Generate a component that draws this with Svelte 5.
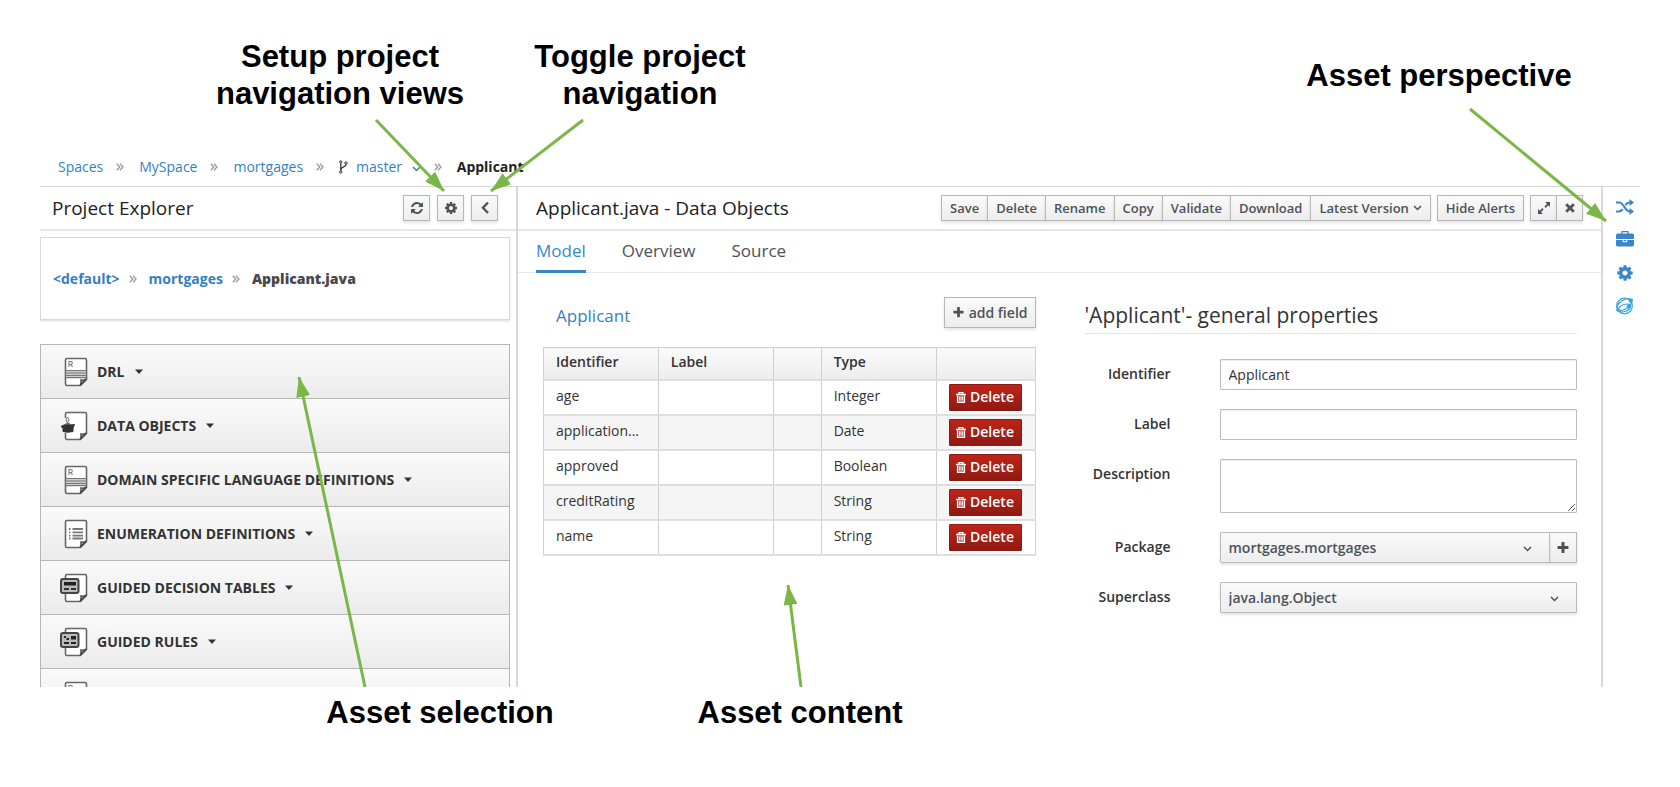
<script>
  const crumbs = ['Spaces', 'MySpace', 'mortgages'];
  const groups = [
    { name: 'DRL', icon: 'rule' },
    { name: 'DATA OBJECTS', icon: 'cup' },
    { name: 'DOMAIN SPECIFIC LANGUAGE DEFINITIONS', icon: 'rule' },
    { name: 'ENUMERATION DEFINITIONS', icon: 'list' },
    { name: 'GUIDED DECISION TABLES', icon: 'table' },
    { name: 'GUIDED RULES', icon: 'form' },
    { name: '', icon: 'rule' }
  ];
  const actions = ['Save', 'Delete', 'Rename', 'Copy', 'Validate', 'Download'];
  const fields = [
    ['age', 'Integer'],
    ['application...', 'Date'],
    ['approved', 'Boolean'],
    ['creditRating', 'String'],
    ['name', 'String']
  ];
  const paths = {
    refresh: 'M1639 1056q0 5-1 7-64 268-268 434.500t-478 166.500q-146 0-282.500-55t-243.500-157l-129 129q-19 19-45 19t-45-19-19-45v-448q0-26 19-45t45-19h448q26 0 45 19t19 45-19 45l-137 137q71 66 161 102t187 36q134 0 250-65t186-179q11-17 53-117 8-23 30-23h192q13 0 22.500 9.500t9.500 22.500zm25-800v448q0 26-19 45t-45 19h-448q-26 0-45-19t-19-45 19-45l138-138q-148-137-349-137-134 0-250 65t-186 179q-11 17-53 117-8 23-30 23h-199q-13 0-22.500-9.500t-9.500-22.500v-7q65-268 270-434.500t480-166.500q146 0 284 55.500t245 156.500l130-129q19-19 45-19t45 19 19 45z',
    cog: 'M1152 896q0-106-75-181t-181-75-181 75-75 181 75 181 181 75 181-75 75-181zm512-109v222q0 12-8 23t-20 13l-185 28q-19 54-39 91 35 50 107 138 10 12 10 25t-9 23q-27 37-99 108t-94 71q-12 0-26-9l-138-108q-44 23-91 38-16 136-29 186-7 28-36 28h-222q-14 0-24.500-8.500t-11.500-21.500l-28-184q-49-16-90-37l-141 107q-10 9-25 9-14 0-25-11-126-114-165-168-7-10-7-23 0-12 8-23 15-21 51-66.500t54-70.500q-27-50-41-99l-183-27q-13-2-21-12.500t-8-23.500v-222q0-12 8-23t19-13l186-28q14-46 39-92-40-57-107-138-10-12-10-24 0-10 9-23 26-36 98.500-107.500t94.500-71.500q13 0 26 10l138 107q44-23 91-38 16-136 29-186 7-28 36-28h222q14 0 24.500 8.500t11.500 21.500l28 184q49 16 90 37l142-107q9-9 24-9 13 0 25 10 129 119 165 170 7 8 7 22 0 12-8 23-15 21-51 66.500t-54 70.500q26 50 41 98l183 28q13 2 21 12.500t8 23.500z',
    plus: 'M1600 736v192q0 40-28 68t-68 28h-416v416q0 40-28 68t-68 28h-192q-40 0-68-28t-28-68v-416h-416q-40 0-68-28t-28-68v-192q0-40 28-68t68-28h416v-416q0-40 28-68t68-28h192q40 0 68 28t28 68v416h416q40 0 68 28t28 68z',
    briefcase: 'M640 256h512v-128h-512v128zm1152 640v480q0 66-47 113t-113 47h-1472q-66 0-113-47t-47-113v-480h672v160q0 26 19 45t45 19h320q26 0 45-19t19-45v-160h672zm-768 0v128h-256v-128h256zm768-480v384h-1792v-384q0-66 47-113t113-47h352v-160q0-40 28-68t68-28h576q40 0 68 28t28 68v160h352q66 0 113 47t47 113z'
  };
</script>

{#snippet glyph(name, size)}
  <svg width={size} height={size} viewBox="0 0 1792 1792" aria-hidden="true"><path fill="currentColor" d={paths[name]} /></svg>
{/snippet}

{#snippet sep()}
  <svg class="sep" width="8" height="8" viewBox="0 0 8 8" aria-hidden="true"><path d="M.8.8 3.800 4 .8 7.200M4 .8 7 4 4 7.200" fill="none" stroke="#999" stroke-width="1.300" /></svg>
{/snippet}

{#snippet down()}
  <svg width="9" height="6" viewBox="0 0 9 6" aria-hidden="true"><path d="M1 1 4.500 4.500 8 1" fill="none" stroke="currentColor" stroke-width="1.500" /></svg>
{/snippet}

{#snippet doc(kind)}
  <svg width="30" height="30" viewBox="0 0 30 30" aria-hidden="true">
    <path d="M7 1.500h18q1.500 0 1.500 1.500v19.500l-6 6H7q-1.500 0-1.500-1.500V3Q5.500 1.500 7 1.500z" fill="#fff" stroke="#666" stroke-width="1.600" />
    <path d="M20 28q1.500-1.500 1-5 3 .5 5.500-1z" fill="#bbb" stroke="#444" stroke-width="1.400" />
    {#if kind === 'rule'}
      <path d="M6 13h20v8H6z" fill="#ccc" />
      <path d="M6 13.500h20M6 16h20M6 18.500h20M6 20.700h20" stroke="#777" stroke-width="1.200" />
      <path d="M9 10V4.500h1.800a1.500 1.500 0 0 1 0 3H9m2 0 1.500 2.500" fill="none" stroke="#777" stroke-width="1.100" />
    {:else if kind === 'cup'}
      <rect x="3" y="7" width="6" height="15" fill="#f5f5f5" />
      <path d="M1 15.500 4 14h7l3.500-.5-1.500 3.500v3.500q-5.500 1.500-10 0V17z" fill="#333" stroke="#333" />
      <path d="M4 14q3.500-4 8 0z" fill="#555" />
      <path d="M7.500 12q-3-3 0-6 3 3 0 6" fill="none" stroke="#777" />
    {:else if kind === 'list'}
      <path d="M9 10h1.500M9 13.300h1.500M9 16.600h1.500M9 19.500h1.500M12.500 10H23M12.500 13.300H23M12.500 16.600H23M12.500 19.500H23" stroke="#777" stroke-width="1.800" />
    {:else}
      <rect x="1" y="6" width="17.500" height="14" rx="2" fill="#bbb" stroke="#444" stroke-width="2" />
      {#if kind === 'table'}
        <path d="M4 9h12v3.500H4z" fill="#222" /><path d="M4 15h5v2H4zM11 15h5v2h-5z" fill="#333" />
      {:else}
        <path d="M4 9h2v2H4zM6.500 11h2.500v2H6.500zM11 9h5v3.500h-5zM4 15h5v2H4zM11 15h5v2h-5z" fill="#222" />
      {/if}
    {/if}
  </svg>
{/snippet}

<div class="page">
  <div class="captions top">
    <p>Setup project<br />navigation views</p>
    <p>Toggle project<br />navigation</p>
    <p class="far">Asset perspective</p>
  </div>

  <div class="app">
    <nav class="crumbs" aria-label="Location">
      {#each crumbs as c}<a href="#top">{c}</a>{@render sep()}{/each}
      <svg class="branch" width="9" height="14" viewBox="0 0 9 14" fill="none" stroke="#333" aria-hidden="true"><circle cx="1.800" cy="2" r="1.200" /><circle cx="1.800" cy="12" r="1.200" /><circle cx="7" cy="3" r="1.200" /><path d="M1.800 3.200v7.600M7 4.200c0 3.500-5 2-5 5.500" stroke-width="1.300" /></svg>
      <a class="master" href="#top">master <span>{@render down()}</span></a>{@render sep()}
      <strong>Applicant</strong>
    </nav>

    <div class="workbench">
      <aside class="explorer">
        <header class="bar">
          <h2>Project Explorer</h2>
          <div class="tools">
            <button class="btn icon" aria-label="Refresh">{@render glyph('refresh', 14)}</button>
            <button class="btn icon" aria-label="Settings">{@render glyph('cog', 14)}</button>
            <button class="btn icon" aria-label="Collapse"><svg width="10" height="14" viewBox="0 0 10 14"><path d="M8 1.500 3 6.800 8 12" fill="none" stroke="currentColor" stroke-width="2.400" /></svg></button>
          </div>
        </header>
        <nav class="trail" aria-label="Package">
          <a href="#top">&lt;default&gt;</a>{@render sep()}<a href="#top">mortgages</a>{@render sep()}<strong>Applicant.java</strong>
        </nav>
        <div class="groups">
          {#each groups as g}
            <button class="group" aria-label={g.name || undefined}>
              {@render doc(g.icon)}
              <span>{g.name}</span>
              {#if g.name}<svg width="8" height="5" viewBox="0 0 8 5" aria-hidden="true"><path d="M0 .5h8L4 5z" fill="#333" /></svg>{/if}
            </button>
          {/each}
        </div>
      </aside>

      <main class="editor">
        <header class="bar">
          <h2>Applicant.java - Data Objects</h2>
          <div class="tools">
            <div class="joined">
              {#each actions as a}<button class="btn">{a}</button>{/each}
              <button class="btn latest">Latest Version {@render down()}</button>
            </div>
            <button class="btn">Hide Alerts</button>
            <div class="joined">
              <button class="btn icon" aria-label="Expand"><svg width="12" height="12" viewBox="0 0 12 12"><path d="M7 0h5v5l-1.700-1.700-2.600 2.600-1.300-1.300 2.600-2.600zM5 12H0V7l1.700 1.700 2.600-2.600 1.300 1.300-2.600 2.600z" fill="currentColor" /></svg></button>
              <button class="btn icon" aria-label="Close"><svg width="10" height="10" viewBox="0 0 10 10"><path d="M1.200 1.200 8.800 8.800M8.800 1.200 1.200 8.800" stroke="currentColor" stroke-width="2.800" /></svg></button>
            </div>
          </div>
        </header>
        <nav class="tabs" aria-label="Views">
          <a class="on" href="#top">Model</a><a href="#top">Overview</a><a href="#top">Source</a>
        </nav>
        <div class="content">
          <section>
            <div class="listhead">
              <a href="#top">Applicant</a>
              <button class="btn big">{@render glyph('plus', 13)} add field</button>
            </div>
            <table>
              <colgroup><col /><col /><col class="narrow" /><col /><col class="last" /></colgroup>
              <thead><tr><th>Identifier</th><th>Label</th><th></th><th>Type</th><th></th></tr></thead>
              <tbody>
                {#each fields as [id, type]}
                  <tr>
                    <td>{id}</td><td></td><td></td><td>{type}</td>
                    <td class="act"><button class="danger"><svg width="10" height="11" viewBox="0 0 10 11" aria-hidden="true"><path d="M0 2.500h10M3 2.500V.7h4v1.800" fill="none" stroke="#fff" stroke-width="1.300" /><path d="M1.500 3.500v6.800h7V3.500" fill="#ffffff55" stroke="#fff" stroke-width="1.200" /><path d="M3.500 4.500v4M5 4.500v4M6.500 4.500v4" stroke="#fff" stroke-width=".8" /></svg>Delete</button></td>
                  </tr>
                {/each}
              </tbody>
            </table>
          </section>
          <section>
            <h3>'Applicant'- general properties</h3>
            <form class="props">
              <label for="ident">Identifier</label><input id="ident" value="Applicant" />
              <label for="lab">Label</label><input id="lab" />
              <label for="desc">Description</label><textarea id="desc"></textarea>
              <label for="pack">Package</label>
              <div class="pick">
                <div class="drop"><select id="pack"><option>mortgages.mortgages</option></select>{@render down()}</div>
                <button type="button" class="btn add" aria-label="Add package">{@render glyph('plus', 14)}</button>
              </div>
              <label for="sup">Superclass</label>
              <div class="drop"><select id="sup"><option>java.lang.Object</option></select>{@render down()}</div>
            </form>
          </section>
        </div>
      </main>

      <nav class="dock" aria-label="Perspective">
        <button aria-label="Impact"><svg width="18" height="18" viewBox="0 0 18 18"><path d="M0 4.500h3c5 0 6 9 10.500 9H15M0 13.500h3c1.600 0 2.700-.9 3.600-2.300M9.500 7C10.600 5.500 11.700 4.500 13.500 4.500H15" fill="none" stroke="currentColor" stroke-width="2.200" /><path d="M13.500 1 18 4.500 13.500 8zM13.500 10l4.500 3.500-4.500 3.500z" fill="currentColor" /></svg></button>
        <button aria-label="Toolbox">{@render glyph('briefcase', 18)}</button>
        <button aria-label="Settings">{@render glyph('cog', 18)}</button>
        <button aria-label="Browser"><svg width="18" height="18" viewBox="0 0 18 18" fill="none" stroke="#39a5dc" stroke-width="1.200"><circle cx="8.500" cy="9" r="7.800" /><ellipse cx="8.500" cy="7.500" rx="8" ry="4.500" transform="rotate(-35 8.500 8)" /><ellipse cx="8.500" cy="11" rx="6.500" ry="3.500" transform="rotate(-20 8.500 11)" /><circle cx="14.800" cy="3.500" r="1.600" fill="#39a5dc" /><circle cx="2" cy="13" r="1.200" fill="#39a5dc" /><circle cx="12.500" cy="9.500" r="1.300" fill="#39a5dc" /></svg></button>
      </nav>
    </div>
  </div>

  <div class="captions bottom">
    <p>Asset selection</p>
    <p>Asset content</p>
  </div>

  <svg class="arrows" aria-hidden="true">
    <defs>
      <marker id="head" viewBox="0 0 20 14" refX="20" refY="7" markerWidth="20" markerHeight="14" markerUnits="userSpaceOnUse" orient="auto"><path d="M0 0 20 7 0 14z" fill="#7ab648" /></marker>
    </defs>
    <g stroke="#7ab648" stroke-width="3" fill="none">
      <path d="M376 120 444 191" marker-end="url(#head)" />
      <path d="M583 120 491 191" marker-end="url(#head)" />
      <path d="M365 687 299 377" marker-end="url(#head)" />
      <path d="M801 687 788 585" marker-end="url(#head)" />
      <svg x="100%" overflow="visible"><path d="M-210 109-74 221" marker-end="url(#head)" /></svg>
    </g>
  </svg>
</div>

<style>
  :global(body) { background: #fff; }
  .page, .page * { box-sizing: border-box; }
  .page { position: relative; display: flex; flex-direction: column; height: 100vh; padding: 38px 40px 56px; overflow: hidden; font: 14px/20px 'Open Sans', 'Noto Sans', sans-serif; color: #333; }
  button, input, select, textarea { font: inherit; color: inherit; margin: 0; }
  a { color: #337fc4; text-decoration: none; }
  h2, h3, p { margin: 0; }
  h2, h3 { font-weight: 400; }
  .captions { display: flex; font: bold 31px/37px 'Liberation Sans', Arial, sans-serif; color: #000; text-align: center; }
  .top { padding: 0 51px 0 150px; align-items: center; }
  .top p { width: 300px; }
  .top .far { margin-left: auto; }
  .bottom { padding: 7px 0 0 220px; }
  .bottom p { width: 360px; }
  .arrows { position: absolute; inset: 0; width: 100%; height: 100%; pointer-events: none; }

  .app { flex: 1; min-height: 0; display: flex; flex-direction: column; padding-top: 36px; }
  .crumbs { display: flex; align-items: center; height: 38px; padding-left: 18px; }
  .sep { flex: none; margin: 0 15px 0 13px; }
  .branch { margin-right: 8px; }
  .master span { padding-left: 6px; }
  .crumbs strong { font-weight: 700; color: #222; }
  .workbench { flex: 1; min-height: 0; display: flex; border-top: 1px solid #d6d6d6; overflow: hidden; }

  .explorer { flex: none; width: 478px; border-right: 2px solid #d9d9d9; }
  .bar { display: flex; align-items: center; justify-content: space-between; height: 44px; border-bottom: 2px solid #e6e6e6; }
  .bar h2 { font-size: 19px; line-height: 26px; color: #222; }
  .explorer .bar { padding: 0 18px 0 12px; }
  .tools, .joined { display: flex; }
  .tools { gap: 6px; }
  .explorer .tools { gap: 7px; }
  .btn { display: inline-flex; align-items: center; justify-content: center; height: 26px; padding: 0 8px; border: 1px solid #b7b7b7; background: linear-gradient(#fafafa, #ededed); box-shadow: 0 2px 3px #0000001c; font-size: 13px; font-weight: 600; color: #4d5258; white-space: nowrap; }
  .btn.icon { width: 27px; padding: 0; }
  .joined .btn + .btn { margin-left: -1px; }
  .latest { gap: 4px; }
  .trail { display: flex; align-items: center; height: 83px; margin: 6px 6px 0 0; padding-left: 12px; border: 1px solid #d9d9d9; box-shadow: 0 1px 2px #00000026; font-weight: 700; color: #484848; }
  .trail .sep { margin: 0 12px 0 9px; }
  .groups { margin: 24px 6px 0 0; border: solid #b7b7b7; border-width: 1px 1px 0; }
  .group { display: flex; align-items: center; width: 100%; height: 54px; padding: 0 0 0 19px; border: 0; border-bottom: 1px solid #b7b7b7; background: linear-gradient(#fafafa, #ebebeb); font-weight: 700; color: #333; }
  .group span { padding: 0 10px 0 7px; }

  .editor { flex: 1; min-width: 0; }
  .editor .bar { padding: 0 18px; }
  .tabs { display: flex; gap: 36px; height: 42px; padding-left: 18px; border-bottom: 1px solid #e8e8e8; font-size: 17px; line-height: 40px; }
  .tabs a { height: 42px; color: #4d5258; }
  .tabs .on { color: #3a87c8; border-bottom: 3px solid #3a87c8; }
  .content { display: grid; grid-template-columns: minmax(0, 1fr) minmax(0, 1fr); gap: 49px; padding: 24px 24px 0 25px; }
  .listhead { display: flex; justify-content: space-between; align-items: flex-start; padding-left: 13px; margin-bottom: 12px; font-size: 17px; line-height: 38px; }
  .big { height: 31px; padding: 0 7px; font-size: 14px; gap: 4px; }
  table { width: 100%; table-layout: fixed; border-collapse: collapse; }
  .narrow { width: 48px; } .last { width: 99px; }
  th, td { border: 1px solid #d1d1d1; padding: 0 12px; text-align: left; white-space: nowrap; }
  th { height: 32px; padding-bottom: 2px; font-weight: 600; background: linear-gradient(#fafafa, #ededed); }
  td { height: 35px; padding-bottom: 2px; border-top: 2px solid #dedede; border-bottom: 2px solid #dedede; }
  td.act { padding-bottom: 0; }
  tbody tr:nth-child(even) { background: #f5f5f5; }
  .danger { display: flex; align-items: center; justify-content: center; gap: 4px; width: 73px; height: 27px; padding: 0; border: 1px solid #8b1a12; border-radius: 1px; background: linear-gradient(#bf2419, #8f1a13); font-weight: 600; color: #fff; }

  h3 { height: 37px; border-bottom: 1px solid #e6e6e6; font-size: 21px; line-height: 36px; }
  .props { display: grid; grid-template-columns: 86px minmax(0, 1fr); column-gap: 49px; row-gap: 19px; padding-top: 25px; }
  .props label { font-weight: 600; line-height: 30px; text-align: right; }
  input, textarea, select { display: block; width: 100%; height: 31px; padding: 0 8px; border: 1px solid #bbb; border-radius: 1px; background: #fff; box-shadow: inset 0 1px 1px #00000013; outline: 0; }
  textarea { height: 54px; }
  .drop { position: relative; flex: 1; }
  select { appearance: none; background: linear-gradient(#fafafa, #ededed); font-weight: 600; color: #4d5258; box-shadow: 0 2px 3px #0000001c; }
  .drop :global(svg) { position: absolute; right: 18px; top: 14px; color: #4d5258; pointer-events: none; }
  .pick { display: flex; }
  .btn.add { width: 28px; height: 31px; padding: 0; margin-left: -1px; }
  .dock { flex: none; display: flex; flex-direction: column; align-items: center; gap: 15px; width: 39px; padding: 11px 0 0 6px; border-left: 2px solid #d9d9d9; }
  .dock button { display: block; height: 18px; padding: 0; border: 0; background: none; color: #3a87c8; }
  .dock svg, .group svg, .btn svg { display: block; flex: none; }
</style>
